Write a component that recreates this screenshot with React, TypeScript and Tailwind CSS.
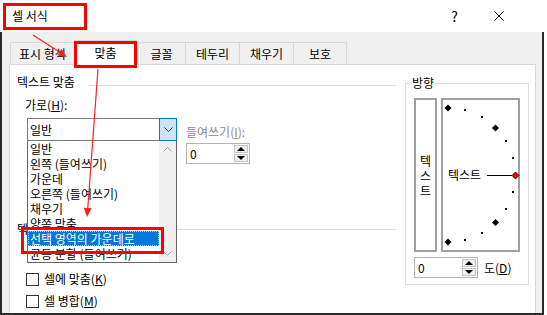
import React from "react";

const items = [
  "일반",
  "왼쪽 (들여쓰기)",
  "가운데",
  "오른쪽 (들여쓰기)",
  "채우기",
  "양쪽 맞춤",
  "선택 영역의 가운데로",
  "균등 분할 (들여쓰기)",
];

function Spinner() {
  return (
    <div className="ml-auto flex h-full w-[16px] flex-col gap-px bg-white p-px">
      <div className="flex flex-1 items-center justify-center border border-[#c4c4c4] bg-[#f0f0f0]">
        <div className="h-0 w-0 border-x-[4px] border-b-[4px] border-x-transparent border-b-black" />
      </div>
      <div className="flex flex-1 items-center justify-center border border-[#c4c4c4] bg-[#f0f0f0]">
        <div className="h-0 w-0 border-x-[4px] border-t-[4px] border-x-transparent border-t-black" />
      </div>
    </div>
  );
}

function NumBox({ w }: { w: string }) {
  return (
    <div className={`flex h-[21px] ${w} items-center border border-[#b4b4b4] bg-white`}>
      <span className="pl-[3px]">0</span>
      <Spinner />
    </div>
  );
}

function Check({ label, k }: { label: string; k: string }) {
  return (
    <div className="flex h-[16px] items-center pl-[9px]">
      <div className="h-[13px] w-[13px] border border-[#333333] bg-white" />
      <span className="ml-[5px]">
        {label}(<span className="underline">{k}</span>)
      </span>
    </div>
  );
}

const tabs = [
  { t: "표시 형식", w: "w-[64px]" },
  { t: "맞춤", w: "w-[63px]", sel: true },
  { t: "글꼴", w: "w-[48px]" },
  { t: "테두리", w: "w-[54px]" },
  { t: "채우기", w: "w-[54px]" },
  { t: "보호", w: "w-[54px]", last: true },
];

export default function App() {
  const big = (x: number, y: number, fill = "#000") => (
    <polygon
      points={`${x},${y - 3.5} ${x + 3.5},${y} ${x},${y + 3.5} ${x - 3.5},${y}`}
      fill={fill}
      stroke="#000"
      strokeWidth={fill === "#000" ? 0 : 0.8}
    />
  );
  const small = (x: number, y: number) => <rect x={x - 1} y={y - 1} width={2} height={2} fill="#000" />;

  return (
    <div className="relative h-[315px] w-[547px] overflow-hidden bg-white font-['Noto_Sans_CJK_KR','Noto_Sans',sans-serif] text-[12px] leading-[16px] text-black">
      {/* title bar */}
      <div className="flex h-[32px] items-center pl-[12px]">
        <span>셀 서식</span>
        <span className="ml-auto text-[14px]">?</span>
        <svg className="ml-[36px] mr-[43px]" width="10" height="10" viewBox="0 0 10 10">
          <path d="M0.5 0.5 L9.5 9.5 M9.5 0.5 L0.5 9.5" stroke="#000" strokeWidth="1" />
        </svg>
      </div>

      {/* body */}
      <div className="flex h-[283px] w-[544px] flex-col border-x-2 border-b-2 border-[#2b2b2b] bg-[#f0f0f0] pl-[7px] pt-[10px]">
        {/* tabs */}
        <div className="ml-[1px] flex h-[22px] items-end">
          {tabs.map((tb) => (
            <div
              key={tb.t}
              className={
                tb.sel
                  ? `relative z-10 -mb-px flex h-[25px] ${tb.w} items-center justify-center border-x border-t border-[#d9d9d9] bg-white`
                  : `flex h-[22px] ${tb.w} items-center justify-center border-l border-t border-[#d9d9d9] ${tb.last ? "border-r" : ""}`
              }
            >
              {tb.t}
            </div>
          ))}
        </div>

        {/* panel */}
        <div className="flex w-[527px] flex-1 border border-b-0 border-[#d9d9d9] bg-white pl-[7px] pt-[9px]">
          {/* left column */}
          <div className="flex w-[379px] flex-col">
            <div className="flex h-[16px] items-center">
              <span>텍스트 맞춤</span>
              <div className="ml-[14px] mt-[6px] h-px flex-1 bg-[#dcdcdc]" />
            </div>
            <div className="ml-[8px] mt-[7px] h-[16px]">
              가로(<span className="underline">H</span>):
            </div>
            <div className="mt-[5px] flex items-start">
              <div className="relative ml-[10px] flex h-[23px] w-[150px] items-center border border-[#7a7a7a] bg-white">
                <span className="pl-[2px]">일반</span>
                <div className="-my-px -mr-px ml-auto flex h-[23px] w-[18px] items-center justify-center border border-[#0078d7] bg-[#cce4f7]">
                  <svg width="9" height="5" viewBox="0 0 9 5">
                    <path d="M0.5 0.5 L4.5 4.5 L8.5 0.5" fill="none" stroke="#333" strokeWidth="1" />
                  </svg>
                </div>
                {/* dropped list */}
                <div className="absolute left-[-1px] top-[22px] z-20 flex h-[122px] w-[150px] border border-t-0 border-[#646464] bg-white">
                  <div className="flex w-[131px] flex-col overflow-hidden">
                    {items.map((it, i) => (
                      <div
                        key={it}
                        className={
                          i === 6
                            ? "h-[15px] shrink-0 whitespace-nowrap border border-dotted border-[#f0c080] bg-[#0078d7] pl-[1px] leading-[13px] text-white"
                            : "h-[15px] shrink-0 whitespace-nowrap pl-[2px] leading-[15px]"
                        }
                      >
                        {it}
                      </div>
                    ))}
                  </div>
                  <div className="flex w-[17px] flex-col justify-between bg-[#f0f0f0]">
                    <div className="flex h-[17px] items-center justify-center">
                      <svg width="9" height="5" viewBox="0 0 9 5">
                        <path d="M0.5 4.5 L4.5 0.5 L8.5 4.5" fill="none" stroke="#a6a6a6" strokeWidth="1" />
                      </svg>
                    </div>
                    <div className="flex h-[17px] items-center justify-center">
                      <svg width="9" height="5" viewBox="0 0 9 5">
                        <path d="M0.5 0.5 L4.5 4.5 L8.5 0.5" fill="none" stroke="#a6a6a6" strokeWidth="1" />
                      </svg>
                    </div>
                  </div>
                </div>
              </div>
              <div className="ml-[9px] flex flex-col">
                <span className="mt-[6px] h-[16px] text-[#8a8a8a]">
                  들여쓰기(<span className="underline">I</span>):
                </span>
                <div className="mt-[3px]">
                  <NumBox w="w-[64px]" />
                </div>
              </div>
            </div>
            <div className="mt-[57px] flex h-[16px] items-center">
              <span>텍스트 제어</span>
              <div className="ml-[14px] h-px flex-1 bg-[#dcdcdc]" />
            </div>
            <div className="mt-[34px]">
              <Check label="셀에 맞춤" k="K" />
            </div>
            <div className="mt-[6px]">
              <Check label="셀 병합" k="M" />
            </div>
          </div>

          {/* orientation group */}
          <div className="relative ml-[9px] mt-[9px] h-[202px] w-[124px] border border-[#dcdcdc] pl-[8px] pt-[14px]">
            <span className="absolute left-[6px] top-[-9px] bg-white">방향</span>
            <div className="flex gap-[4px]">
              <div className="flex h-[154px] w-[23px] flex-col items-center justify-center border-2 border-[#a0a0a0] leading-[15px]">
                <span>텍</span>
                <span>스</span>
                <span>트</span>
              </div>
              <div className="relative h-[154px] w-[79px] border-2 border-[#a0a0a0]">
                <svg className="absolute left-[-2px] top-[-2px]" width="79" height="154" viewBox="0 0 79 154">
                  {big(7, 10)}
                  {small(24, 12)}
                  {small(41, 19)}
                  {big(54.5, 30)}
                  {small(65, 43)}
                  {small(72, 60)}
                  <text x="7" y="81.5" fontSize="12" fill="#000" fontFamily="'Noto Sans CJK KR', sans-serif">
                    텍스트
                  </text>
                  <line x1="46" y1="77.5" x2="71" y2="77.5" stroke="#000" strokeWidth="1" />
                  {big(74.5, 77.5, "#ff0000")}
                  {small(72, 94)}
                  {small(65, 111)}
                  {big(54.5, 124.5)}
                  {small(41, 135)}
                  {small(24, 142)}
                  {big(7, 144)}
                </svg>
              </div>
            </div>
            <div className="mt-[5px] flex items-center">
              <NumBox w="w-[64px]" />
              <span className="ml-[6px]">
                도(<span className="underline">D</span>)
              </span>
            </div>
          </div>
        </div>
      </div>

      {/* annotations */}
      <div className="pointer-events-none absolute left-[3px] top-[3px] z-30 h-[27px] w-[84px] border-[3px] border-[#ff0000]" />
      <div className="pointer-events-none absolute left-[74px] top-[41px] z-30 h-[27px] w-[63px] border-[3px] border-[#ff0000]" />
      <div className="pointer-events-none absolute left-[21px] top-[227px] z-30 h-[27px] w-[143px] border-[3px] border-[#ff0000]" />
      <svg className="pointer-events-none absolute left-0 top-0 z-30" width="547" height="315" viewBox="0 0 547 315">
        <line x1="33" y1="35" x2="61" y2="53" stroke="#ff2020" strokeWidth="1.2" />
        <polygon points="67,57 57.3,55.6 61.5,48.8" fill="#ff2020" />
        <line x1="98" y1="69" x2="87.7" y2="209" stroke="#ff2020" strokeWidth="1.2" />
        <polygon points="87,217 91.7,208.3 83.7,207.7" fill="#ff2020" />
      </svg>
    </div>
  );
}
